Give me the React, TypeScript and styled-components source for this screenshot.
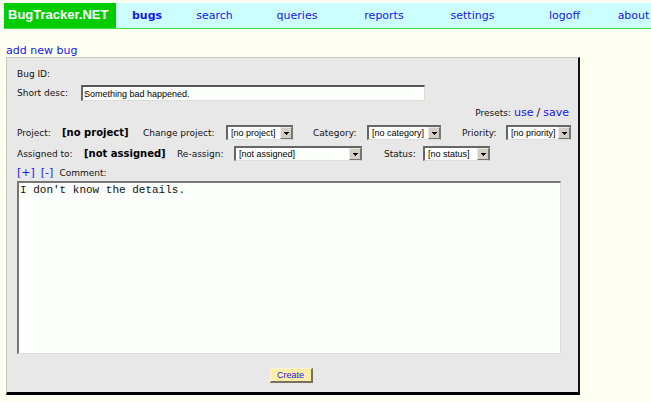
import React from "react";
import styled, { createGlobalStyle } from "styled-components";

const GlobalStyle = createGlobalStyle`
  * { box-sizing: border-box; }
  body {
    margin: 0;
    background: #fdfff0;
    color: #111;
    font-family: "DejaVu Sans", Verdana, sans-serif;
    font-size: 9px;
  }
`;

const Page = styled.div`
  padding: 3px 0 7px 4px;
`;

const Header = styled.header`
  display: flex;
  height: 26px;
  background: #ccffff;
  border-bottom: 1px solid #44dd44;
`;

const Logo = styled.a`
  flex: none;
  width: 112px;
  padding-left: 4px;
  background: #00cc00;
  color: #fff;
  font: bold 13px/24px "Liberation Sans", Arial, sans-serif;
  text-decoration: none;
  white-space: nowrap;
`;

const Nav = styled.nav`
  flex: 1;
  display: grid;
  grid-template-columns:
    minmax(0, 48fr) minmax(0, 87fr) minmax(0, 78fr) minmax(0, 96fr)
    minmax(0, 81fr) minmax(0, 103fr) minmax(0, 35fr);
  justify-items: center;
  padding-left: 7px;
`;

const Link = styled.a<{ $current?: boolean }>`
  color: #1414f5;
  font-size: 11px;
  line-height: 16px;
  font-weight: ${(p) => (p.$current ? "bold" : "normal")};
  text-decoration: none;
  white-space: nowrap;
`;

const NavLink = styled(Link)`
  line-height: 26px;
`;

const Main = styled.main`
  padding: 16px 16px 0 2px;
`;

const AddLine = styled.div`
  display: flex;
  height: 12px;
  align-items: center;
`;

const Panel = styled.form`
  max-width: 574px;
  padding: 7px 9px 9px 10px;
  background: #e9e8e9;
  border: 1px solid #c8c8c4;
  border-right: 2px solid #111;
  border-bottom: 3px solid #000;
`;

const Row = styled.div<{ $height: number; $end?: boolean }>`
  display: flex;
  align-items: center;
  justify-content: ${(p) => (p.$end ? "flex-end" : "flex-start")};
  min-height: ${(p) => p.$height}px;
  white-space: nowrap;
`;

const Label = styled.label<{ $width?: number }>`
  flex: none;
  width: ${(p) => (p.$width ? p.$width + "px" : "auto")};
`;

const Caption = styled.span<{ $width?: number }>`
  flex: none;
  width: ${(p) => (p.$width ? p.$width + "px" : "auto")};
`;

const Value = styled.strong<{ $width: number }>`
  flex: none;
  width: ${(p) => p.$width}px;
  color: #000;
  font-size: 10px;
`;

const Presets = styled.div`
  display: flex;
  align-items: center;
  gap: 3px;
`;

const Slash = styled.span`
  font-size: 11px;
`;

const TextInput = styled.input`
  width: 344px;
  height: 16px;
  padding: 0 1px;
  background: #fdfffd;
  border: 1px solid #dcdcd8;
  border-top: 2px solid #555;
  border-left: 2px solid #666;
  font: 9px "Liberation Sans", Arial, sans-serif;
  color: #000;
`;

const SelectBox = styled.span<{ $width: number; $gap?: number }>`
  position: relative;
  display: flex;
  flex: none;
  width: ${(p) => p.$width}px;
  margin-right: ${(p) => p.$gap ?? 0}px;
`;

const Select = styled.select`
  appearance: none;
  width: 100%;
  height: 15px;
  padding: 0 14px 0 3px;
  background: #fdfffd;
  border: 1px solid #dcdcd8;
  border-top: 2px solid #666;
  border-left: 2px solid #666;
  border-right-color: #777;
  border-radius: 0;
  font: 9px "Liberation Sans", Arial, sans-serif;
  color: #000;
`;

const ArrowButton = styled.span`
  position: absolute;
  top: 2px;
  right: 1px;
  bottom: 1px;
  width: 12px;
  display: grid;
  place-items: center;
  background: #d2cec6;
  border: 1px solid #eceae4;
  border-right-color: #77746e;
  border-bottom-color: #77746e;
  pointer-events: none;
`;

const CommentTools = styled.div`
  display: flex;
  align-items: center;
  gap: 6px;
`;

const SizeButton = styled.button`
  padding: 0;
  border: 0;
  background: none;
  color: #1414f5;
  font: 11px/14px "DejaVu Sans", Verdana, sans-serif;
`;

const CommentArea = styled.textarea`
  display: block;
  width: calc(100% - 8px);
  height: 173px;
  padding: 1px;
  resize: none;
  background: #fdfffd;
  border: 1px solid #dcdcd8;
  border-top: 2px solid #777;
  border-left: 2px solid #777;
  font: 11px/13px "Liberation Mono", "Courier New", monospace;
  color: #111;
`;

const Actions = styled.div`
  display: flex;
  justify-content: center;
  padding: 14px 4px 0 0;
`;

const CreateButton = styled.button`
  width: 43px;
  height: 15px;
  padding: 0;
  background: #ffeeaa;
  border: 1px solid #fff4d0;
  border-right: 2px solid #77705c;
  border-bottom: 2px solid #77705c;
  color: #1414e0;
  font: 9px/12px "Liberation Sans", Arial, sans-serif;
`;

function Dropdown(props: { id: string; option: string; width: number; gap?: number }) {
  return (
    <SelectBox $width={props.width} $gap={props.gap}>
      <Select id={props.id}>
        <option>{props.option}</option>
      </Select>
      <ArrowButton aria-hidden="true">
        <svg width="5" height="3" viewBox="0 0 5 3" shapeRendering="crispEdges">
          <path d="M0 0h5v1H4v1H3v1H2V2H1V1H0z" fill="#000" />
        </svg>
      </ArrowButton>
    </SelectBox>
  );
}

const pages = ["bugs", "search", "queries", "reports", "settings", "logoff", "about"];

export default function App() {
  return (
    <>
      <GlobalStyle />
      <Page>
        <Header>
          <Logo href="#home">BugTracker.NET</Logo>
          <Nav>
            {pages.map((page) => (
              <NavLink key={page} href={`#${page}`} $current={page === "bugs"}>
                {page}
              </NavLink>
            ))}
          </Nav>
        </Header>
        <Main>
          <AddLine>
            <Link href="#add">add new bug</Link>
          </AddLine>
          <Panel onSubmit={(e) => e.preventDefault()}>
            <Row $height={18}>
              <Caption>Bug ID:</Caption>
            </Row>
            <Row $height={20}>
              <Label htmlFor="desc" $width={64}>Short desc:</Label>
              <TextInput id="desc" type="text" defaultValue="Something bad happened." />
            </Row>
            <Row $height={19} $end>
              <Presets>
                <Caption>Presets:</Caption>
                <Link href="#use">use</Link>
                <Slash>/</Slash>
                <Link href="#save">save</Link>
              </Presets>
            </Row>
            <Row $height={21}>
              <Caption $width={45}>Project:</Caption>
              <Value $width={81}>[no project]</Value>
              <Label htmlFor="project" $width={83}>Change project:</Label>
              <Dropdown id="project" option="[no project]" width={67} gap={20} />
              <Label htmlFor="category" $width={54}>Category:</Label>
              <Dropdown id="category" option="[no category]" width={74} gap={21} />
              <Label htmlFor="priority" $width={44}>Priority:</Label>
              <Dropdown id="priority" option="[no priority]" width={65} />
            </Row>
            <Row $height={21}>
              <Caption $width={67}>Assigned to:</Caption>
              <Value $width={93}>[not assigned]</Value>
              <Label htmlFor="assign" $width={57}>Re-assign:</Label>
              <Dropdown id="assign" option="[not assigned]" width={128} gap={22} />
              <Label htmlFor="status" $width={39}>Status:</Label>
              <Dropdown id="status" option="[no status]" width={67} />
            </Row>
            <Row $height={17}>
              <CommentTools>
                <SizeButton type="button">[+]</SizeButton>
                <SizeButton type="button">[-]</SizeButton>
                <Label htmlFor="comment">Comment:</Label>
              </CommentTools>
            </Row>
            <CommentArea id="comment" defaultValue="I don't know the details." />
            <Actions>
              <CreateButton type="submit">Create</CreateButton>
            </Actions>
          </Panel>
        </Main>
      </Page>
    </>
  );
}
